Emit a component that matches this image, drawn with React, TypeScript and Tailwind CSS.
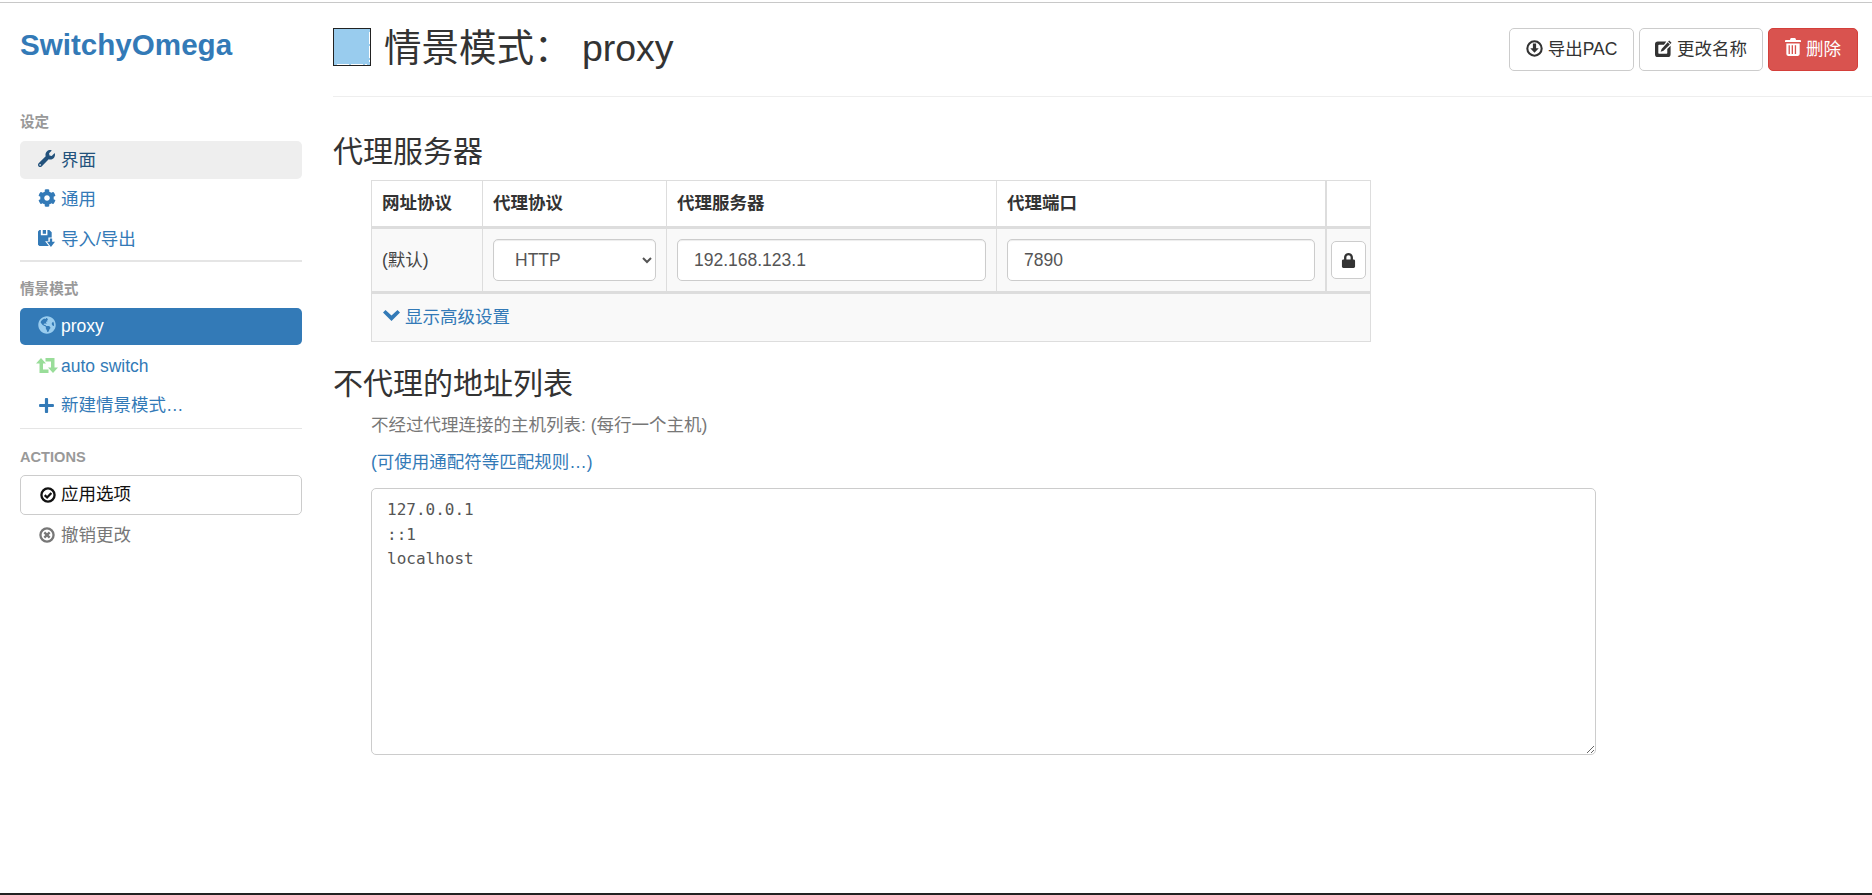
import { FaCog, FaGlobeAmericas, FaLock, FaPlus, FaWrench } from 'react-icons/fa'

const SaveIcon = () => (
  <svg viewBox="0 0 18 18" className="w-[17px] h-[17px]" fill="currentColor">
    <path d="M0 1.500 1.500 0H3v5.500h7V0h2l2.500 2.500V8H11v4H7.500l4 5H1.500L0 15.500Z" />
    <path d="M5 0h3.500v4H5Z" />
    <path d="M12.500 9h2.500v3.500h3L13.700 18 9.500 12.500h3Z" />
  </svg>
)

const RetweetIcon = () => (
  <svg viewBox="0 0 22 15" className="w-[22px] h-[15px] -ml-[2px] text-[#99dd99]" fill="currentColor">
    <path d="M5 0l5 5.500H7V11.500H12.500V15H3.500V5.500H0Z" />
    <path d="M17 15l-5-5.500H15V3.500H9.500V0H18.500V9.500H22Z" />
  </svg>
)

const ChevronDown = () => (
  <svg viewBox="0 0 17 11" className="w-[17px] h-[11px] -mt-[4px]" fill="currentColor">
    <path d="M2.500 0 8.500 5.500 14.500 0 17 2.500 8.500 11 0 2.500Z" />
  </svg>
)

const OkCircle = () => (
  <svg viewBox="0 0 18 18" className="w-[16px] h-[16px]" fill="none" stroke="currentColor">
    <circle cx="9" cy="9" r="7.400" strokeWidth="2.600" />
    <path d="M5.300 9.200 8 11.800l4.800-5" strokeWidth="2.600" />
  </svg>
)

const RemoveCircle = () => (
  <svg viewBox="0 0 18 18" className="w-[16px] h-[16px]" fill="none" stroke="currentColor">
    <circle cx="9" cy="9" r="7.400" strokeWidth="2.600" />
    <path d="M6 6l6 6M12 6l-6 6" strokeWidth="2.600" />
  </svg>
)

const DownloadCircle = () => (
  <svg viewBox="0 0 18 18" className="w-[17px] h-[17px] -mt-[2px]" fill="none" stroke="currentColor">
    <circle cx="9" cy="9" r="7.600" strokeWidth="2.200" />
    <path d="M7.300 3.800h3.400v5h2.800L9 13.600 4.500 8.800h2.800Z" fill="currentColor" stroke="none" />
  </svg>
)

const EditIcon = () => (
  <svg viewBox="0 0 18 18" className="w-[17px] h-[17px] -mt-[2px]" fill="currentColor">
    <path d="M3 1.500h9L9.500 5H4.300a.8.800 0 0 0-.8.800v7.900a.8.800 0 0 0 .8.800h7.900a.8.800 0 0 0 .8-.8V9.500L16.500 6v9a3 3 0 0 1-3 3H3a3 3 0 0 1-3-3V4.500a3 3 0 0 1 3-3Z" />
    <path d="M13.500 2.500 15.700 4.700 9 11.500 6 12.500 7 9.500Z" />
    <path d="M15 0.500 17.500 3 16.300 4.200 13.900 1.700Z" />
  </svg>
)

const TrashIcon = () => (
  <svg viewBox="0 0 18 20" className="w-[16px] h-[18px] -mt-[5px]" fill="currentColor">
    <path d="M6.500 0h5l1 2H17a1 1 0 0 1 1 1v1.500H0V3a1 1 0 0 1 1-1h4.500Z" />
    <path d="M1.500 6h15v12a2 2 0 0 1-2 2h-11a2 2 0 0 1-2-2ZM4 8v10h1.500V8Zm3.500 0v10H9V8Zm3.500 0v10h1.500V8Z" fillRule="evenodd" />
  </svg>
)

const navLink = 'flex items-center h-[37.5px] mt-[2px] rounded-[5px] pl-[18px] text-[#337ab7]'
const iconBox = 'w-[23px] flex justify-start items-center shrink-0'
const sectionLabel = 'h-[20px] leading-[20px] text-[14.6px] font-bold text-[#999]'
const inputBase = 'w-full h-[42.5px] rounded-[5px] border border-[#ccc] bg-white text-[#555] text-[17.5px] shadow-[inset_0_1px_1px_rgba(0,0,0,0.075)]'
const btn = 'h-[43px] flex items-center gap-[5px] rounded-[5px] border text-[17.5px]'

export default function App() {
  return (
    <div className="h-screen flex flex-col bg-white text-[#333] text-[17.5px] [font-family:'Liberation_Sans','Noto_Sans_CJK_SC',sans-serif] overflow-hidden">
      <div className="mt-[2px] h-px bg-[#c8c8c8] shrink-0" />

      <div className="flex flex-1 min-h-0">
        {/* Sidebar */}
        <aside className="w-[333px] shrink-0 pl-[20px] pr-[31px]">
          <div className="h-[109px] pt-[22px]">
            <div className="text-[29.6px] leading-[40px] font-bold text-[#337ab7]">SwitchyOmega</div>
          </div>

          <div className={sectionLabel}>设定</div>
          <nav className="mt-[9px]">
            <div className={`${navLink} bg-[#eee] !text-[#23527c]`}>
              <span className={iconBox}><FaWrench className="w-[17px] h-[17px] -mt-[3px]" /></span>界面
            </div>
            <div className={navLink}>
              <span className={iconBox}><FaCog className="w-[18px] h-[18px] -mt-[3px]" /></span>通用
            </div>
            <div className={navLink}>
              <span className={iconBox}><SaveIcon /></span>导入/导出
            </div>
          </nav>
          <div className="mt-[2px] h-[2px] bg-[#e5e5e5]" />

          <div className={`${sectionLabel} mt-[17px]`}>情景模式</div>
          <nav className="mt-[9px]">
            <div className={`${navLink} bg-[#337ab7] !text-white`}>
              <span className={iconBox}><FaGlobeAmericas className="w-[18px] h-[18px] text-[#99ccee] -mt-[3px]" /></span>proxy
            </div>
            <div className={navLink}>
              <span className={iconBox}><RetweetIcon /></span>auto switch
            </div>
            <div className={navLink}>
              <span className={iconBox}><FaPlus className="w-[17px] h-[17px]" /></span>新建情景模式…
            </div>
          </nav>
          <div className="mt-[4px] h-px bg-[#e5e5e5]" />

          <div className={`${sectionLabel} mt-[17.5px]`}>ACTIONS</div>
          <div className="mt-[8px] flex items-center h-[40px] rounded-[5px] border border-[#ccc] pl-[19px] text-[#111]">
            <span className="w-[21px] flex items-center shrink-0"><OkCircle /></span>应用选项
          </div>
          <div className="flex items-center h-[37.5px] mt-[2px] pl-[19px] text-[#777]">
            <span className="w-[22px] flex items-center shrink-0"><RemoveCircle /></span>撤销更改
          </div>
        </aside>

        {/* Main */}
        <main className="flex-1 min-w-0">
          <header className="h-[94px] border-b border-[#eee] flex items-start justify-between pr-[14px]">
            <div className="flex items-center mt-[25px] h-[38px]">
              <svg viewBox="0 0 38 38" className="w-[38px] h-[38px]">
                <rect x="0.500" y="0.500" width="37" height="37" fill="#99ccee" stroke="#222" />
                <path d="M36.500 4v30M4 36.500h30" stroke="#fff" strokeDasharray="12 2" fill="none" />
              </svg>
              <h1 className="ml-[13px] mt-[2px] text-[37.5px] leading-[38px] font-normal text-[#333] whitespace-pre">情景模式： proxy</h1>
            </div>
            <div className="flex gap-[5px] mt-[25px]">
              <button className={`${btn} w-[125px] justify-center border-[#ccc] bg-white text-[#333]`}><DownloadCircle />导出PAC</button>
              <button className={`${btn} w-[124px] justify-center border-[#ccc] bg-white text-[#333]`}><EditIcon />更改名称</button>
              <button className={`${btn} w-[90px] justify-center border-[#d43f3a] bg-[#d9534f] text-white`}><TrashIcon />删除</button>
            </div>
          </header>

          <h3 className="mt-[35px] h-[40px] text-[30px] leading-[40px] font-normal">代理服务器</h3>

          <table className="mt-[8px] ml-[38px] w-[999px] table-fixed border-collapse border border-[#ddd]">
            <thead>
              <tr className="h-[47px] border-b-[3px] border-[#ddd] text-left">
                <th className="w-[111px] border-r border-[#ddd] pl-[10px] font-bold">网址协议</th>
                <th className="w-[184px] border-r border-[#ddd] pl-[10px] font-bold">代理协议</th>
                <th className="w-[330px] border-r border-[#ddd] pl-[10px] font-bold">代理服务器</th>
                <th className="w-[329px] border-r-2 border-[#ddd] pl-[10px] font-bold">代理端口</th>
                <th className="w-[45px]" />
              </tr>
            </thead>
            <tbody>
              <tr className="h-[65px] border-b-[3px] border-[#ddd] bg-[#f9f9f9]">
                <td className="border-r border-[#ddd] pl-[10px] text-[#444]">(默认)</td>
                <td className="border-r border-[#ddd] px-[10px]">
                  <select defaultValue="HTTP" className={`${inputBase} pl-[17px] pr-[4px] text-[#555]`}>
                    <option>HTTP</option>
                  </select>
                </td>
                <td className="border-r border-[#ddd] px-[10px]">
                  <input defaultValue="192.168.123.1" className={`${inputBase} px-[16px]`} />
                </td>
                <td className="border-r-2 border-[#ddd] px-[10px]">
                  <input defaultValue="7890" className={`${inputBase} px-[16px]`} />
                </td>
                <td className="pl-[4px]">
                  <button className="w-[35px] h-[38px] flex items-center justify-center rounded-[5px] border border-[#ccc] bg-white text-[#333]">
                    <FaLock className="w-[15px] h-[15px]" />
                  </button>
                </td>
              </tr>
              <tr className="h-[49px] bg-[#f9f9f9]">
                <td colSpan={5} className="pl-[11px]">
                  <div className="flex items-center gap-[5px] text-[#337ab7]">
                    <ChevronDown />显示高级设置
                  </div>
                </td>
              </tr>
            </tbody>
          </table>

          <h3 className="mt-[22px] h-[40px] text-[30px] leading-[40px] font-normal">不代理的地址列表</h3>
          <div className="ml-[38px] mt-[9px] leading-[25px] text-[#777]">不经过代理连接的主机列表: (每行一个主机)</div>
          <div className="ml-[38px] mt-[12px] leading-[25px] text-[#337ab7]">(可使用通配符等匹配规则…)</div>
          <textarea
            defaultValue={'127.0.0.1\n::1\nlocalhost'}
            className="block ml-[38px] mt-[13px] w-[1225px] h-[267px] rounded-[5px] border border-[#ccc] px-[15px] py-[9px] text-[16px] leading-[24.500px] text-[#555] [font-family:'DejaVu_Sans_Mono',monospace] outline-none"
          />
        </main>
      </div>

      <div className="h-[2px] bg-[#222] shrink-0" />
    </div>
  )
}
